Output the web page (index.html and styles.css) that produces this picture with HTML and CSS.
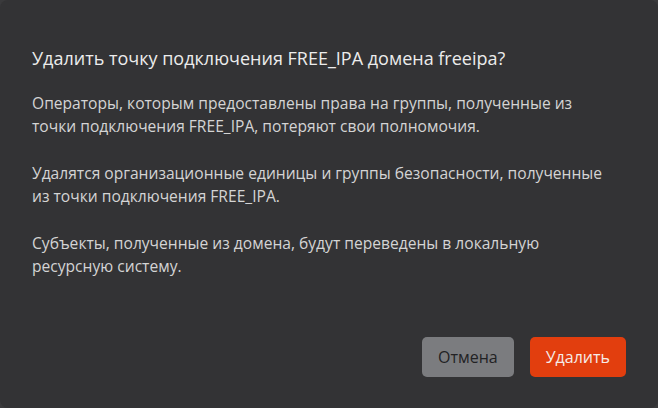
FILE: index.html
```html
<!DOCTYPE html>
<html lang="ru">
<head>
<meta charset="utf-8">
<link rel="stylesheet" href="styles.css">
</head>
<body>
<div class="dialog">
  <h1 class="title">Удалить точку подключения FREE_IPA домена freeipa?</h1>
  <div class="content">
    <p>Операторы, которым предоставлены права на группы, полученные из точки подключения FREE_IPA, потеряют свои полномочия.</p>
    <p>Удалятся организационные единицы и группы безопасности, полученные из точки подключения FREE_IPA.</p>
    <p>Субъекты, полученные из домена, будут переведены в локальную ресурсную систему.</p>
  </div>
  <div class="actions">
    <button class="btn btn-cancel">Отмена</button>
    <button class="btn btn-delete">Удалить</button>
  </div>
</div>
</body>
</html>
```

FILE: styles.css
```css
html, body {
  margin: 0;
  padding: 0;
  background: #3a3a3c;
}
.dialog {
  width: 658px;
  height: 408px;
  box-sizing: border-box;
  background: #333335;
  border-radius: 8px;
  padding: 44px 32px 31px 32px;
  display: flex;
  flex-direction: column;
  font-family: "Open Sans", sans-serif;
}
.title {
  margin: 0;
  font-size: 18px;
  font-weight: 400;
  line-height: 28px;
  color: #ececec;
}
.content {
  margin-top: 20px;
  width: 586px;
}
.content p {
  margin: 0 0 24px 0;
  font-size: 15.6px;
  line-height: 23px;
  color: #d4d4d4;
}
.actions {
  margin-top: auto;
  display: flex;
  justify-content: flex-end;
  gap: 16px;
}
.btn {
  height: 40px;
  border: none;
  border-radius: 5px;
  font-family: "Open Sans", sans-serif;
  font-size: 16px;
  padding: 0 16px;
}
.btn-cancel {
  background: #7b7c7f;
  color: #222224;
}
.btn-delete {
  background: #e23e0e;
  color: #f5ece8;
}
```
